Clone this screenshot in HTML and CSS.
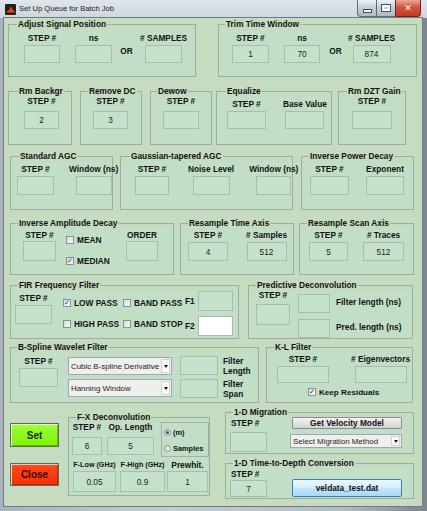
FILE: index.html
```
<!DOCTYPE html>
<html lang="en">
<head>
<meta charset="utf-8">
<title>Set Up Queue for Batch Job</title>
<link rel="stylesheet" href="styles.css">
</head>
<body>
<div class="win">
  <div class="tb">
    <svg class="ico" width="11" height="11" viewBox="0 0 11 11"><rect width="11" height="11" rx="1" fill="#2a1d16"/><path d="M1 8 L4 6 L6 2 L7 5 L10 9 L7 8 L5 9 Z" fill="#e0401a"/><path d="M6 2 L7 5 L10 9 L8 7 Z" fill="#f7a21b"/></svg>
    <span class="ttl">Set Up Queue for Batch Job</span>
    <div class="caps"><span class="cap cmin"><i></i></span><span class="cap cmax"><i></i></span><span class="cap ccls">✕</span></div>
  </div>
  <div class="client">
    <div class="row r1">
      <fieldset class="pn p1 ml4"><legend class="l8">Adjust Signal Position</legend>
        <div class="in pl15 mt4">
          <div class="f"><div class="lb">STEP #</div><div class="bx w36 h18"></div></div>
          <div class="f ml15"><div class="lb">ns</div><div class="bx w37 h18"></div></div>
          <div class="or ml8">OR</div>
          <div class="f ml7"><div class="lb"># SAMPLES</div><div class="bx w37 h18"></div></div>
        </div>
      </fieldset>
      <fieldset class="pn p2 ml22"><legend class="l6">Trim Time Window</legend>
        <div class="in pl13 mt4">
          <div class="f"><div class="lb">STEP #</div><div class="bx w37 h18">1</div></div>
          <div class="f ml15"><div class="lb">ns</div><div class="bx w36 h18">70</div></div>
          <div class="or ml9">OR</div>
          <div class="f ml6"><div class="lb"># SAMPLES</div><div class="bx w38 h18">874</div></div>
        </div>
      </fieldset>
    </div>

    <div class="row r2">
      <fieldset class="pn prb ml4"><legend class="l9">Rm Backgr</legend>
        <div class="in g5 pl15">
          <div class="f"><div class="lb">STEP #</div><div class="bx w35 h18">2</div></div>
        </div>
      </fieldset>
      <fieldset class="pn prdc ml8"><legend>Remove DC</legend>
        <div class="in g5 pl12">
          <div class="f"><div class="lb">STEP #</div><div class="bx w35 h18">3</div></div>
        </div>
      </fieldset>
      <fieldset class="pn pdw ml8"><legend class="l6">Dewow</legend>
        <div class="in g5 pl12">
          <div class="f"><div class="lb">STEP #</div><div class="bx w36 h18"></div></div>
        </div>
      </fieldset>
      <fieldset class="pn peq ml4"><legend class="l9">Equalize</legend>
        <div class="in pl10 mt3">
          <div class="f"><div class="lb">STEP #</div><div class="bx w39 h18"></div></div>
          <div class="f ml17"><div class="lb">Base Value</div><div class="bx w39 h18"></div></div>
        </div>
      </fieldset>
      <fieldset class="pn pdzt ml6"><legend class="l8">Rm DZT Gain</legend>
        <div class="in g5 pl13">
          <div class="f"><div class="lb">STEP #</div><div class="bx w40 h18"></div></div>
        </div>
      </fieldset>
    </div>

    <div class="row r3">
      <fieldset class="pn pstd ml6"><legend class="l8">Standard AGC</legend>
        <div class="in pl6 mt3">
          <div class="f"><div class="lb">STEP #</div><div class="bx w37 h19"></div></div>
          <div class="f ml15"><div class="lb">Window (ns)</div><div class="bx w36 h19"></div></div>
        </div>
      </fieldset>
      <fieldset class="pn pgau ml7"><legend class="l9">Gaussian-tapered AGC</legend>
        <div class="in pl14 mt3">
          <div class="f"><div class="lb">STEP #</div><div class="bx w34 h19"></div></div>
          <div class="f ml19"><div class="lb">Noise Level</div><div class="bx w37 h19"></div></div>
          <div class="f ml15"><div class="lb">Window (ns)</div><div class="bx w35 h19"></div></div>
        </div>
      </fieldset>
      <fieldset class="pn pipd ml8"><legend>Inverse Power Decay</legend>
        <div class="in pl8 mt3">
          <div class="f"><div class="lb">STEP #</div><div class="bx w39 h19"></div></div>
          <div class="f ml17"><div class="lb">Exponent</div><div class="bx w38 h19"></div></div>
        </div>
      </fieldset>
    </div>

    <div class="row r4">
      <fieldset class="pn piad ml6"><legend>Inverse Amplitude Decay</legend>
        <div class="in g1 pl12 mt2">
          <div class="f"><div class="lb">STEP #</div><div class="bx w33 h20"></div></div>
          <div class="chk ml10">
            <div class="ck"><span class="cb"></span><span>MEAN</span></div>
            <div class="ck ck2"><span class="cb on">✓</span><span>MEDIAN</span></div>
          </div>
          <div class="f"><div class="lb">ORDER</div><div class="bx w32 h20"></div></div>
        </div>
      </fieldset>
      <fieldset class="pn prta ml6"><legend>Resample Time Axis</legend>
        <div class="in pl7 mt2">
          <div class="f"><div class="lb">STEP #</div><div class="bx w40 h19">4</div></div>
          <div class="f ml18"><div class="lb"># Samples</div><div class="bx w40 h19">512</div></div>
        </div>
      </fieldset>
      <fieldset class="pn prsa ml5"><legend>Resample Scan Axis</legend>
        <div class="in pl9 mt2">
          <div class="f"><div class="lb">STEP #</div><div class="bx w39 h19">5</div></div>
          <div class="f ml15"><div class="lb"># Traces</div><div class="bx w41 h19">512</div></div>
        </div>
      </fieldset>
    </div>

    <div class="row r5">
      <fieldset class="pn pfir ml6"><legend>FIR Frequency Filter</legend>
        <div class="in pl4">
          <div class="f mt3"><div class="lb">STEP #</div><div class="bx w37 h19"></div></div>
          <div class="cbg ml11">
            <div class="ck"><span class="cb on">✓</span><span>LOW PASS</span></div>
            <div class="ck"><span class="cb"></span><span>BAND PASS</span></div>
            <div class="ck"><span class="cb"></span><span>HIGH PASS</span></div>
            <div class="ck"><span class="cb"></span><span>BAND STOP</span></div>
          </div>
          <div class="fgrid ml2">
            <span class="lb">F1</span><div class="bx w35 h20"></div>
            <span class="lb">F2</span><div class="bx w35 h20 white"></div>
          </div>
        </div>
      </fieldset>
      <fieldset class="pn ppd ml9"><legend>Predictive Deconvolution</legend>
        <div class="in g4 pl7">
          <div class="f"><div class="lb">STEP #</div><div class="bx w34 h21"></div></div>
          <div class="pgrid ml8">
            <div class="bx w32 h19"></div><span class="lb">Filter length (ns)</span>
            <div class="bx w32 h19"></div><span class="lb">Pred. length (ns)</span>
          </div>
        </div>
      </fieldset>
    </div>

    <div class="row r6">
      <fieldset class="pn pbsw ml6"><legend class="l6">B-Spline Wavelet Filter</legend>
        <div class="in pl8">
          <div class="f mt4"><div class="lb">STEP #</div><div class="bx w39 h19"></div></div>
          <div class="dds ml10">
            <div class="dd w104"><span class="ddt">Cubic B-spline Derivative</span><span class="arr"><i></i></span></div>
            <div class="dd w104 dd2"><span class="ddt">Hanning Window</span><span class="arr"><i></i></span></div>
          </div>
          <div class="sgrid ml8">
            <div class="bx w38 h19"></div><span class="lb2">Filter<br>Length</span>
            <div class="bx w38 h19"></div><span class="lb2">Filter<br>Span</span>
          </div>
        </div>
      </fieldset>
      <fieldset class="pn pkl ml7"><legend>K-L Filter</legend>
        <div class="in pl10 mt2">
          <div class="f"><div class="lb">STEP #</div><div class="bx w52 h17"></div></div>
          <div class="f ml22"><div class="lb"># Eigenvectors</div><div class="bx w52 h17"></div></div>
        </div>
        <div class="ck keep"><span class="cb on">✓</span><span>Keep Residuals</span></div>
      </fieldset>
    </div>

    <div class="row r7">
      <div class="lcol ml6">
        <button class="btn bset">Set</button>
        <button class="btn bclose">Close</button>
      </div>
      <fieldset class="pn pfx ml9"><legend>F-X Deconvolution</legend>
        <div class="in g5 pl3">
          <div class="f"><div class="lb">STEP #</div><div class="bx w30 h18">6</div></div>
          <div class="f ml5"><div class="lb">Op. Length</div><div class="bx w47 h18">5</div></div>
          <div class="rg ml7">
            <div class="rd"><span class="ro on"></span><span>(m)</span></div>
            <div class="rd rd2"><span class="ro"></span><span>Samples</span></div>
          </div>
        </div>
        <div class="in g1 pl4 mt3">
          <div class="f"><div class="lb sm">F-Low (GHz)</div><div class="bx w43 h21">0.05</div></div>
          <div class="f ml4"><div class="lb sm">F-High (GHz)</div><div class="bx w45 h21">0.9</div></div>
          <div class="f ml2"><div class="lb">Prewhit.</div><div class="bx w41 h21">1</div></div>
        </div>
      </fieldset>
      <div class="rcol ml15">
        <fieldset class="pn pmig"><legend>1-D Migration</legend>
          <div class="in pl4">
            <div class="f left mt1 g4"><div class="lb">STEP #</div><div class="bx w37 h20"></div></div>
            <div class="mrt ml23">
              <button class="gbtn">Get Velocity Model</button>
              <div class="dd w112 mdd"><span class="ddt">Select Migration Method</span><span class="arr"><i></i></span></div>
            </div>
          </div>
        </fieldset>
        <fieldset class="pn pt2d"><legend>1-D Time-to-Depth Conversion</legend>
          <div class="in pl4">
            <div class="f left mt1 g1"><div class="lb">STEP #</div><div class="bx w37 h17">7</div></div>
            <button class="vbtn ml25">veldata_test.dat</button>
          </div>
        </fieldset>
      </div>
    </div>
  </div>
</div>
</body>
</html>
```

FILE: styles.css
```
*{box-sizing:border-box;margin:0;padding:0}
html,body{width:427px;height:511px;overflow:hidden}
body{font-family:"Liberation Sans",Arial,sans-serif;font-size:8.3px;color:#111;background:#8d969f}
.win{width:427px;height:511px;display:flex;flex-direction:column;background:linear-gradient(90deg,#aab3bc,#c3ccd4 40%,#b3bcc5 80%,#7d858d)}
.tb{height:18px;display:flex;align-items:flex-start;background:linear-gradient(#dfe5eb,#cdd6de);flex:none}
.ico{margin:4px 0 0 5px;flex:none}
.ttl{margin:4px 0 0 3px;font-size:7.6px;line-height:10px;color:#1a1a1a;white-space:nowrap}
.caps{margin-left:auto;margin-right:6px;display:flex}
.cap{height:17px;border:1px solid #5e6b78;border-top:none;display:flex;align-items:center;justify-content:center;background:linear-gradient(#eef2f6,#c3ccd6 50%,#aeb9c4)}
.cmin{width:19px;border-radius:0 0 0 4px;border-right:none}
.cmin i{display:block;width:7px;height:2px;background:#fff;box-shadow:0 0 0 1px #46505a;margin-top:5px}
.cmax{width:19px;border-right:none}
.cmax i{display:block;width:8px;height:6px;border:2px solid #fff;box-shadow:0 0 0 1px #46505a}
.ccls{width:26px;border-radius:0 0 4px 0;background:linear-gradient(#eaa897,#d0553f 45%,#c13a24);color:#fff;font-family:"DejaVu Sans",sans-serif;font-size:9px;font-weight:bold;border-color:#6b2a20}
.client{margin-left:4px;width:418px;height:488px;background:#c5dcc1;box-shadow:0 0 0 1px #6e7a86;overflow:hidden}

.row{display:flex;align-items:flex-start}
.r1{margin-top:1px;height:67px}
.r2{height:65px}
.r3{height:67px}
.r4{height:62px}
.r5{height:62px}
.r6{height:65px}

.pn{flex:none;min-width:0;border:1px solid #9cb0a0;background:linear-gradient(transparent 5px,#c3dec7 5px);padding:0}
.pn legend{font-weight:bold;line-height:10px;padding:0 1px;margin-left:7px;white-space:nowrap;color:#111}
.pn legend.l6{margin-left:6px}
.pn legend.l8{margin-left:8px}
.pn legend.l9{margin-left:9px}

.p1{width:188px;height:58px}
.p2{width:199px;height:58px}
.prb{width:64px;height:59px}
.prdc{width:62px;height:59px}
.pdw{width:62px;height:59px}
.peq{width:116px;height:59px}
.pdzt{width:68px;height:59px}
.pstd{width:103px;height:59px}
.pgau{width:173px;height:59px}
.pipd{width:113px;height:59px}
.piad{width:164px;height:57px}
.prta{width:114px;height:57px}
.prsa{width:115px;height:57px}
.pfir{width:229px;height:59px}
.ppd{width:165px;height:59px}
.pbsw{width:249px;height:61px}
.pkl{width:147px;height:61px}
.pfx{width:142px;height:84px;margin-top:5px}
.pmig{width:189px;height:47px}
.pt2d{width:189px;height:41px;margin-top:4px}

.in{display:flex;align-items:flex-start}
.f{display:flex;flex-direction:column;align-items:center;flex:none}
.f.left{align-items:flex-start}
.f.left .lb{padding-left:1px}
.lb{font-weight:bold;line-height:10px;height:10px;white-space:nowrap}
.lb.sm{font-size:7.2px}
.lb2{font-weight:bold;line-height:10px;white-space:nowrap}
.bx{flex:none;border:1px solid #a6bfab;background:#c6e1cb;display:flex;align-items:center;justify-content:center;color:#222;font-weight:normal}
.f .bx{margin-top:2px}
.g1 .bx{margin-top:1px}
.g4 .bx{margin-top:4px}
.g5 .bx{margin-top:5px}
.bx.white{background:#fff;border-color:#b5b5b5}
.or{width:13px;text-align:center;font-weight:bold;line-height:10px;margin-top:13px;flex:none}

.chk{width:60px;margin-top:5px;flex:none}
.ck{display:flex;align-items:center;height:10px;font-weight:bold;white-space:nowrap}
.ck2{margin-top:11px}
.cb{width:8px;height:8px;border:1px solid #8c8f94;background:linear-gradient(135deg,#d6d9dc,#fbfbfb);margin-right:3px;flex:none;display:flex;align-items:center;justify-content:center;font-family:"DejaVu Sans",sans-serif;font-size:7px;line-height:7px;color:#22387a;font-weight:bold}
.cbg{display:grid;grid-template-columns:60px 60px;row-gap:11px;margin-top:8px;flex:none}
.fgrid{display:grid;grid-template-columns:13px 35px;grid-template-rows:20px 20px;row-gap:5px;align-items:center;margin-top:1px;flex:none}
.fgrid .lb{height:auto}
.pgrid{display:grid;grid-template-columns:32px auto;grid-template-rows:19px 19px;row-gap:6px;column-gap:6px;align-items:center;margin-top:2px;flex:none}
.pgrid .lb{height:auto}
.dds{margin-top:5px;flex:none}
.dd{display:flex;align-items:center;border:1px solid #a3a7ab;background:#eef0ee;padding-left:2px;font-size:7.9px;white-space:nowrap;color:#222}
.ddt{flex:1;min-width:0;overflow:hidden}
.dd.w104{width:104px;height:18px}
.dd2{margin-top:4px}
.dd.w112{width:112px;height:14px}
.arr{flex:none;margin-left:1px;width:9px;height:calc(100% - 2px);margin-right:1px;background:#fafafa;border:1px solid #d0d0d0;display:flex;align-items:center;justify-content:center}
.arr i{display:block;width:0;height:0;border-left:2.5px solid transparent;border-right:2.5px solid transparent;border-top:3px solid #111}
.sgrid{display:grid;grid-template-columns:38px auto;grid-template-rows:19px 19px;row-gap:4px;column-gap:5px;align-items:center;margin-top:4px;flex:none}
.keep{margin:4px 0 0 41px;font-size:8.1px}

.lcol{width:49px;flex:none;display:flex;flex-direction:column}
.btn{width:49px;font-family:"Liberation Sans",Arial,sans-serif;font-weight:bold;font-size:10px;border:1px solid #5f6b5a;box-shadow:inset 1px 1px 0 rgba(255,255,255,.7),inset -1px -1px 0 rgba(0,0,0,.25)}
.bset{height:24px;margin-top:16px;background:linear-gradient(#9dff3a,#7ef400);color:#1c2a10}
.bclose{height:23px;margin-top:16px;background:linear-gradient(#ff4a1e,#fb2e00);color:#3a0500}

.rg{width:48px;height:35px;border:1px solid #a0b4a4;padding:4px 0 0 2px;flex:none}
.rd{display:flex;align-items:center;height:10px;font-weight:bold;font-size:7.4px;white-space:nowrap}
.rd2{margin-top:6px}
.ro{width:7px;height:7px;border-radius:50%;border:1px solid #8c8f94;background:linear-gradient(135deg,#d0d4d8,#fafafa);margin-right:2px;flex:none;display:flex;align-items:center;justify-content:center}
.ro.on::after{content:"";width:3px;height:3px;border-radius:50%;background:#2d4a7a}

.rcol{width:189px;flex:none;display:flex;flex-direction:column}
.mt1{margin-top:1px}
.mrt{flex:none;display:flex;flex-direction:column}
.gbtn{width:110px;height:12px;margin-left:2px;border:1px solid #8d8d8d;border-radius:1px;background:linear-gradient(#f6f6f6,#e2e2e2 50%,#d3d3d3);font-family:"Liberation Sans",Arial,sans-serif;font-weight:bold;font-size:8.3px;line-height:10px;color:#111}
.mdd{margin-top:5px}
.vbtn{width:110px;height:18px;margin-top:11px;border:1px solid #3c7fb1;border-radius:2px;background:linear-gradient(#eaf6fd,#d9effc 45%,#bee6fd 55%,#a7d9f5);font-family:"Liberation Sans",Arial,sans-serif;font-weight:bold;font-size:8.3px;color:#111}

.pl3{padding-left:3px}.pl4{padding-left:4px}.pl6{padding-left:6px}.pl7{padding-left:7px}.pl8{padding-left:8px}.pl9{padding-left:9px}.pl10{padding-left:10px}.pl12{padding-left:12px}.pl13{padding-left:13px}.pl14{padding-left:14px}.pl15{padding-left:15px}
.ml2{margin-left:2px}.ml4{margin-left:4px}.ml5{margin-left:5px}.ml6{margin-left:6px}.ml7{margin-left:7px}.ml8{margin-left:8px}.ml9{margin-left:9px}.ml10{margin-left:10px}.ml11{margin-left:11px}.ml15{margin-left:15px}.ml17{margin-left:17px}.ml18{margin-left:18px}.ml19{margin-left:19px}.ml22{margin-left:22px}.ml23{margin-left:23px}.ml25{margin-left:25px}
.mt2{margin-top:2px}.mt3{margin-top:3px}.mt4{margin-top:4px}
.w30{width:30px}.w32{width:32px}.w33{width:33px}.w34{width:34px}.w35{width:35px}.w36{width:36px}.w37{width:37px}.w38{width:38px}.w39{width:39px}.w40{width:40px}.w41{width:41px}.w43{width:43px}.w45{width:45px}.w47{width:47px}.w52{width:52px}
.h17{height:17px}.h18{height:18px}.h19{height:19px}.h20{height:20px}.h21{height:21px}
```
